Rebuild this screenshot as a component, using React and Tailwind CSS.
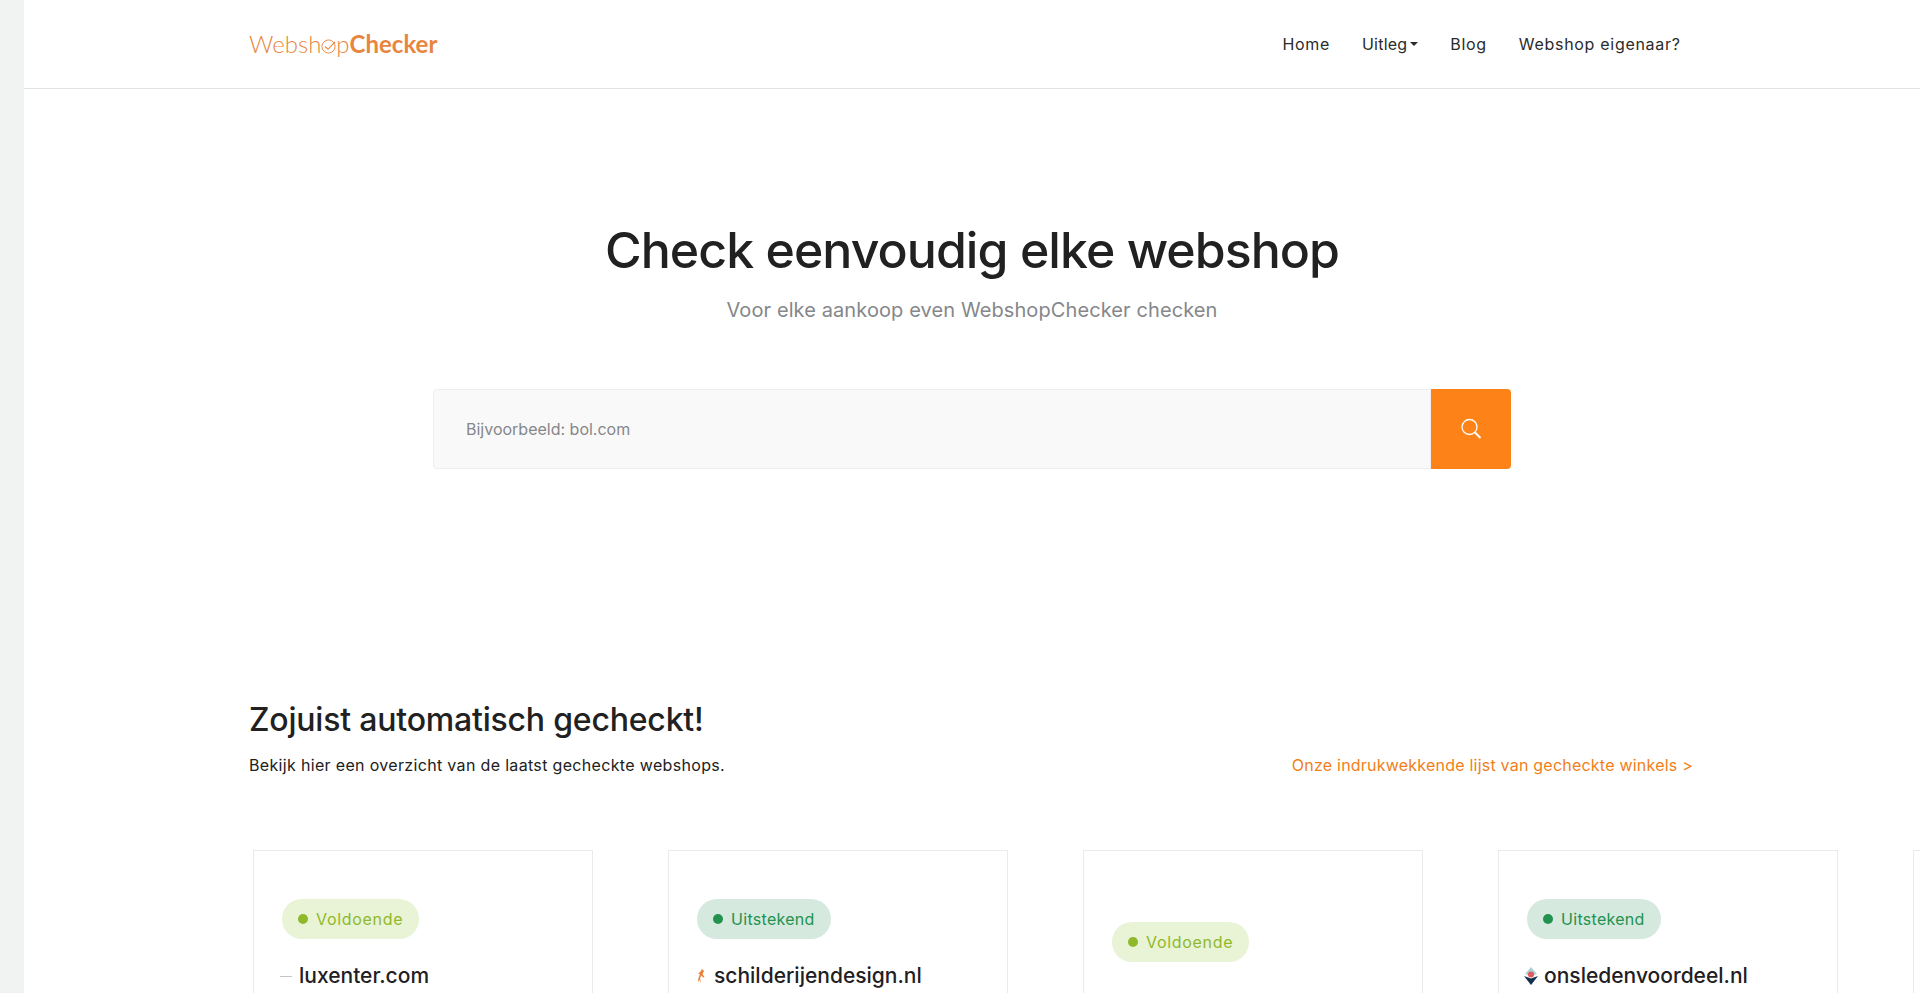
import React from 'react';

const font = { fontFamily: 'Inter, "Liberation Sans", sans-serif' };

const navItems = ['Home', 'Uitleg', 'Blog', 'Webshop eigenaar?'];

const cards = [
    { status: 'Voldoende', name: 'luxenter.com', icon: 'dash' },
    { status: 'Uitstekend', name: 'schilderijendesign.nl', icon: 'frog' },
    { status: 'Voldoende', name: '', icon: null, low: true },
    { status: 'Uitstekend', name: 'onsledenvoordeel.nl', icon: 'diamond' },
    { status: '', name: '', icon: null },
];

const Favicon = ({ type }) => {
    if (type === 'dash') {
        return <span className="block w-3 h-px bg-[#c4c4c4]" />;
    }
    if (type === 'frog') {
        return (
            <svg viewBox="0 0 12 16" className="w-3 h-4">
                <path d="M7 1 L9 3 L7.5 6 L9.5 9 L8 9.5 L6.5 7.5 L5 10 L6 15 L4.5 12 L3 14 L3.5 10 L5 6 L3 6 L5.5 3.5 Z" fill="#e8803c" />
            </svg>
        );
    }
    if (type === 'diamond') {
        return (
            <svg viewBox="0 0 16 18" className="w-4 h-[18px]">
                <path d="M8 0 L14 7 L8 9 L2 7 Z" fill="#a9d3d3" />
                <path d="M1 9 L8 11.5 L15 9 L8 18 Z" fill="#12304d" />
                <circle cx="8" cy="7.5" r="3" fill="#e4575c" />
            </svg>
        );
    }
    return null;
};

const StatusBadge = ({ status }) => {
    const good = status === 'Uitstekend';
    return (
        <div className={`inline-flex items-center gap-2 h-10 px-4 rounded-[20px] text-base ${good ? 'bg-[#d5e9df] text-[#23924f] tracking-[0.3px]' : 'bg-[#e9f3d6] text-[#8fb92a] tracking-[0.7px]'}`}>
            <span className={`w-2.5 h-2.5 rounded-full ${good ? 'bg-[#23924f]' : 'bg-[#8fb92a]'}`} />
            {status}
        </div>
    );
};

const Card = ({ card }) => (
    <div className={`w-[340px] h-[300px] shrink-0 border border-[#e9ecef] bg-white px-7 ${card.low ? 'pt-[71px]' : 'pt-12'}`}>
        {card.status && <StatusBadge status={card.status} />}
        {card.name && (
            <div className="flex items-center gap-[5px] mt-[23px] -ml-1 text-[21px] leading-7 font-medium text-[#1f2023]">
                <span className="w-4 flex justify-center"><Favicon type={card.icon} /></span>
                {card.name}
            </div>
        )}
    </div>
);

const App = () => {
    return (
        <div className="flex h-screen overflow-hidden bg-white" style={font}>
            <div className="w-6 shrink-0 bg-[#f1f3f2]" />

            <div className="flex-1 min-w-0">
                {/* Header */}
                <header className="flex items-center h-[89px] border-b border-[#e2e2e2] pl-[225px]">
                    <div className="flex items-center text-[24px] text-[#e8863f]" style={{ fontFamily: 'Lato, sans-serif' }}>
                        <span className="font-light">Websh</span>
                        <svg viewBox="0 0 16 16" className="w-[15px] h-[15px] mt-1">
                            <circle cx="8" cy="8" r="7" fill="none" stroke="#e8863f" strokeWidth="1" />
                            <path d="M4.5 8 L7.5 11 L15 3" fill="none" stroke="#e8863f" strokeWidth="1.2" />
                        </svg>
                        <span className="font-light">p</span>
                        <span className="font-bold">Checker</span>
                    </div>

                    <nav className="flex items-center gap-[32px] ml-[845px] text-base text-[#2b2b2b] tracking-[0.7px]">
                        {navItems.map((item) => (
                            <a key={item} className={`flex items-center gap-[3px] ${item === 'Uitleg' ? 'tracking-[0.2px]' : ''}`}>
                                {item}
                                {item === 'Uitleg' && <span className="w-0 h-0 border-x-4 border-x-transparent border-t-4 border-t-[#2b2b2b]" />}
                            </a>
                        ))}
                    </nav>
                </header>

                {/* Hero */}
                <section className="pt-[131px] flex flex-col items-center">
                    <h1 className="text-[50px] leading-[60px] font-medium text-[#212121] tracking-[-0.95px]">Check eenvoudig elke webshop</h1>
                    <p className="mt-4 text-[20px] leading-7 text-[#85878a] tracking-[0.1px]">Voor elke aankoop even WebshopChecker checken</p>

                    <div className="flex mt-[65px] w-[1078px] h-[80px]">
                        <div className="flex-1 flex items-center pl-8 bg-[#f9f9f9] border border-[#eeeeee] rounded-l text-base text-[#85878a]">
                            Bijvoorbeeld: bol.com
                        </div>
                        <button className="w-20 flex items-center justify-center bg-[#fd8217] rounded-r">
                            <svg viewBox="0 0 24 24" className="w-6 h-6">
                                <circle cx="10.5" cy="10" r="7.5" fill="none" stroke="#fff" strokeWidth="1.3" />
                                <path d="M16 15.5 L21.5 21" stroke="#fff" strokeWidth="2" />
                            </svg>
                        </button>
                    </div>
                </section>

                {/* Recent checks */}
                <section className="pl-[225px] pt-[231px]">
                    <h2 className="text-[32px] leading-10 font-medium text-[#212121] tracking-[-0.2px]">Zojuist automatisch gecheckt!</h2>
                    <div className="flex items-center justify-between w-[1444px] mt-[13px] text-base leading-6">
                        <p className="text-[#212121] tracking-[0.33px]">Bekijk hier een overzicht van de laatst gecheckte webshops.</p>
                        <a className="text-[#f0801a] tracking-[0.22px]">Onze indrukwekkende lijst van gecheckte winkels &gt;</a>
                    </div>
                    <div className="flex gap-[75px] mt-[73px] ml-1">
                        {cards.map((card, i) => (
                            <Card key={i} card={card} />
                        ))}
                    </div>
                </section>
            </div>
        </div>
    );
};

export default App;
